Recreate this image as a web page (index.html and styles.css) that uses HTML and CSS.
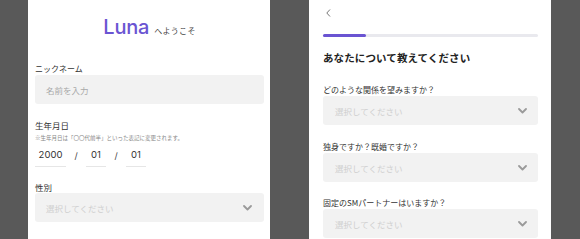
FILE: index.html
```html
<!DOCTYPE html>
<html lang="ja">
<head>
<meta charset="utf-8">
<link rel="stylesheet" href="styles.css">
</head>
<body>
<div class="stage">
  <section class="panel panel-left">
    <div class="brand"><span class="logo">Luna</span><span class="welcome">へようこそ</span></div>
    <div class="label l-nick">ニックネーム</div>
    <div class="field"><span class="ph">名前を入力</span></div>
    <div class="label l-birth">生年月日</div>
    <div class="note">※生年月日は「〇〇代前半」といった表記に変更されます。</div>
    <div class="date-row">
      <div class="date-box w30">2000</div>
      <div class="slash">/</div>
      <div class="date-box w20">01</div>
      <div class="slash">/</div>
      <div class="date-box w20">01</div>
    </div>
    <div class="label l-gender">性別</div>
    <div class="field select"><span class="ph2">選択してください</span>
      <svg class="chev" width="9" height="6" viewBox="0 0 9 6"><polyline points="1,1 4.5,4.5 8,1" fill="none" stroke="#9a9a9a" stroke-width="1.8" stroke-linecap="round" stroke-linejoin="round"/></svg>
    </div>
  </section>
  <section class="panel panel-right">
    <div class="back"><svg width="5" height="8" viewBox="0 0 5 8"><polyline points="4,0.5 0.8,4 4,7.5" fill="none" stroke="#666" stroke-width="0.9"/></svg></div>
    <div class="progress"><div class="progress-fill" style="width:20%"></div></div>
    <h1 class="heading">あなたについて教えてください</h1>
    <div class="label q1">どのような関係を望みますか？</div>
    <div class="field select"><span class="ph2">選択してください</span>
      <svg class="chev" width="9" height="6" viewBox="0 0 9 6"><polyline points="1,1 4.5,4.5 8,1" fill="none" stroke="#9a9a9a" stroke-width="1.8" stroke-linecap="round" stroke-linejoin="round"/></svg>
    </div>
    <div class="label q2">独身ですか？既婚ですか？</div>
    <div class="field select"><span class="ph2">選択してください</span>
      <svg class="chev" width="9" height="6" viewBox="0 0 9 6"><polyline points="1,1 4.5,4.5 8,1" fill="none" stroke="#9a9a9a" stroke-width="1.8" stroke-linecap="round" stroke-linejoin="round"/></svg>
    </div>
    <div class="label q3">固定のSMパートナーはいますか？</div>
    <div class="field select"><span class="ph2">選択してください</span>
      <svg class="chev" width="9" height="6" viewBox="0 0 9 6"><polyline points="1,1 4.5,4.5 8,1" fill="none" stroke="#9a9a9a" stroke-width="1.8" stroke-linecap="round" stroke-linejoin="round"/></svg>
    </div>
  </section>
</div>
</body>
</html>
```
FILE: styles.css
```css
* { box-sizing: border-box; margin: 0; padding: 0; }
html, body { width: 580px; height: 239px; overflow: hidden; }
body {
  background: #595959;
  font-family: "Noto Sans CJK JP", "Noto Sans", sans-serif;
  color: #333;
}
.stage {
  display: flex;
  gap: 39px;
  padding-left: 28px;
  height: 239px;
}
.panel {
  width: 242px;
  height: 239px;
  background: #fff;
  display: flex;
  flex-direction: column;
  overflow: hidden;
}
.panel-left { padding: 0 6px 0 7px; }
.panel-right { padding: 0 13px 0 14px; }

.brand {
  margin-top: 14px;
  height: 26px;
  line-height: 26px;
  display: flex;
  justify-content: center;
  align-items: baseline;
  gap: 5px;
}
.logo {
  font-family: Inter, Roboto, sans-serif;
  font-size: 20px;
  font-weight: 500;
  color: #6a54d2;
  letter-spacing: -0.2px;
}
.welcome { font-size: 8px; color: #444; letter-spacing: 0.3px; }

.label {
  font-size: 8px;
  line-height: 12px;
  height: 12px;
  color: #333;
}
.l-nick { margin-top: 23px; }
.l-birth { margin-top: 15px; font-size: 8.5px; }
.l-gender { margin-top: 14px; font-size: 8.5px; }

.field {
  height: 29px;
  background: #f2f2f2;
  border-radius: 3px;
  display: flex;
  align-items: center;
  padding-left: 11px;
}
.ph { font-size: 8.5px; color: #a9a9a9; }
.ph2 { font-size: 8.5px; color: #cfcfcf; }
.select { justify-content: space-between; padding-right: 12px; }
.panel-right .select { padding-left: 12px; padding-right: 11px; }
.chev { display: block; }

.note {
  margin-top: 3px;
  font-size: 5.5px;
  line-height: 8px;
  height: 8px;
  color: #888;
  white-space: nowrap;
}
.date-row {
  margin-top: 4px;
  display: flex;
  height: 21px;
}
.date-box {
  height: 21px;
  border-bottom: 1px solid #e6e6e6;
  font-family: Inter, Roboto, sans-serif;
  font-size: 9.5px;
  line-height: 18px;
  text-align: center;
  color: #333;
}
.w30 { width: 31px; }
.w20 { width: 20px; }
.slash {
  width: 20px;
  text-align: center;
  font-family: Inter, Roboto, sans-serif;
  font-size: 9px;
  line-height: 20px;
  color: #444;
}

.back {
  height: 26px;
  padding-left: 3px;
  display: flex;
  align-items: center;
}
.progress {
  margin-top: 8px;
  height: 3px;
  background: #e9e9ee;
  border-radius: 2px;
}
.progress-fill {
  height: 3px;
  background: #6a54d2;
  border-radius: 2px;
}
.heading {
  margin-top: 13px;
  font-size: 10.5px;
  line-height: 16px;
  font-weight: 700;
  color: #222;
  letter-spacing: 0.1px;
}
.q1 { margin-top: 18px; }
.q2 { margin-top: 16px; }
.q3 { margin-top: 15px; }
```
